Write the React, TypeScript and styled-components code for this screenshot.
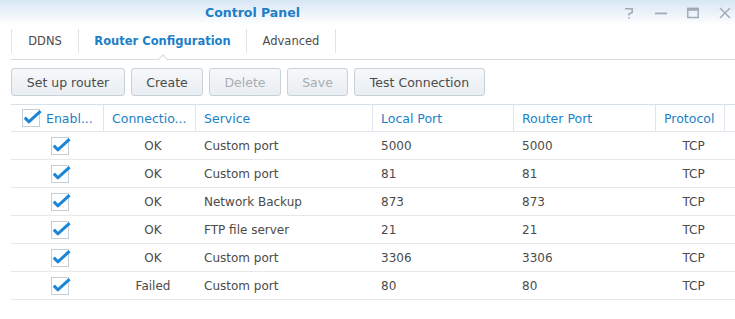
import React from "react";
import styled, { createGlobalStyle } from "styled-components";

const GlobalStyle = createGlobalStyle`
  html, body {
    margin: 0;
    padding: 0;
    background: #fff;
  }
  body {
    font-family: "DejaVu Sans", Verdana, sans-serif;
    font-size: 12px;
    color: #4b4b4b;
  }
`;

const BLUE = "#1c7fc8";
const GRID = "92px 92px 177px 141px 142px 69px";

type Rule = {
  enabled: boolean;
  status: string;
  service: string;
  local: string;
  router: string;
  protocol: string;
};

const rules: Rule[] = [
  { enabled: true, status: "OK", service: "Custom port", local: "5000", router: "5000", protocol: "TCP" },
  { enabled: true, status: "OK", service: "Custom port", local: "81", router: "81", protocol: "TCP" },
  { enabled: true, status: "OK", service: "Network Backup", local: "873", router: "873", protocol: "TCP" },
  { enabled: true, status: "OK", service: "FTP file server", local: "21", router: "21", protocol: "TCP" },
  { enabled: true, status: "OK", service: "Custom port", local: "3306", router: "3306", protocol: "TCP" },
  { enabled: true, status: "Failed", service: "Custom port", local: "80", router: "80", protocol: "TCP" },
];

const Check: React.FC = () => (
  <svg width="20" height="18" viewBox="0 0 20 18">
    <rect x="0.5" y="0.5" width="17" height="17" fill="#fff" stroke="#c3cfd9" />
    <path
      d="M2.8 8.6 L6.8 12.8 L18.6 2.2"
      fill="none"
      stroke="#1b86d8"
      strokeWidth="3"
      strokeLinejoin="round"
    />
  </svg>
);

const HelpIcon = () => (
  <svg width="12" height="12" viewBox="0 0 12 12">
    <path d="M2 1.8 H9.2 V5.4 L6 7 V8.6" fill="none" stroke="#a3acb5" strokeWidth="1.6" />
    <rect x="5.2" y="10" width="1.6" height="1.6" fill="#a3acb5" />
  </svg>
);

const MinIcon = () => (
  <svg width="12" height="12" viewBox="0 0 12 12">
    <rect x="0" y="5.5" width="12" height="1.8" fill="#a3acb5" />
  </svg>
);

const MaxIcon = () => (
  <svg width="12" height="12" viewBox="0 0 12 12">
    <rect x="0.75" y="1.5" width="10.5" height="9" fill="none" stroke="#a3acb5" strokeWidth="1.5" />
    <rect x="0" y="0.8" width="12" height="3" fill="#a3acb5" />
  </svg>
);

const CloseIcon = () => (
  <svg width="12" height="12" viewBox="0 0 12 12">
    <path d="M1 1 L11 11 M11 1 L1 11" stroke="#a3acb5" strokeWidth="1.5" />
  </svg>
);

const App: React.FC = () => (
  <>
    <GlobalStyle />
    <Window>
      <TitleBar>
        <Title>Control Panel</Title>
        <Controls>
          <HelpIcon />
          <MinIcon />
          <MaxIcon />
          <CloseIcon />
        </Controls>
      </TitleBar>

      <TabBar>
        <Tab $w={68}>DDNS</Tab>
        <Tab $w={168} $active>
          Router Configuration
        </Tab>
        <Tab $w={89}>Advanced</Tab>
      </TabBar>

      <Toolbar>
        <Button $w={114}>Set up router</Button>
        <Button $w={72}>Create</Button>
        <Button $w={72} disabled>
          Delete
        </Button>
        <Button $w={61} disabled>
          Save
        </Button>
        <Button $w={131}>Test Connection</Button>
      </Toolbar>

      <Table>
        <HeadRow>
          <HeadCell $first>
            <Check />
            <span>Enabl...</span>
          </HeadCell>
          <HeadCell>Connectio...</HeadCell>
          <HeadCell>Service</HeadCell>
          <HeadCell>Local Port</HeadCell>
          <HeadCell>Router Port</HeadCell>
          <HeadCell>Protocol</HeadCell>
          <HeadCell />
        </HeadRow>
        {rules.map((r, i) => (
          <Row key={i}>
            <Cell $center>{r.enabled && <Check />}</Cell>
            <Cell $center>{r.status}</Cell>
            <Cell>{r.service}</Cell>
            <Cell>{r.local}</Cell>
            <Cell>{r.router}</Cell>
            <Cell $center>{r.protocol}</Cell>
          </Row>
        ))}
      </Table>
    </Window>
  </>
);

const Window = styled.div`
  width: 735px;
  height: 319px;
  overflow: hidden;
  background: #fff;
  display: flex;
  flex-direction: column;
`;

const TitleBar = styled.div`
  height: 25px;
  flex: none;
  display: flex;
  align-items: center;
  padding: 0 4px 0 205px;
  background: linear-gradient(#d8e7f4, #eef5fb 60%, #ffffff);
`;

const Title = styled.div`
  flex: 1;
  font-size: 12.5px;
  font-weight: bold;
  color: ${BLUE};
`;

const Controls = styled.div`
  display: flex;
  align-items: center;
  gap: 20px;
`;

const TabBar = styled.div`
  flex: none;
  height: 35px;
  box-sizing: border-box;
  margin-left: 11px;
  padding-top: 4px;
  display: flex;
  align-items: flex-start;
  border-bottom: 1px solid #d5dbe1;
`;

const Tab = styled.div<{ $w: number; $active?: boolean }>`
  position: relative;
  width: ${(p) => p.$w}px;
  height: 24px;
  box-sizing: border-box;
  display: flex;
  align-items: center;
  justify-content: center;
  border-right: 1px solid #dfe4e9;
  font-size: ${(p) => (p.$active ? "11.5px" : "11.5px")};
  font-weight: ${(p) => (p.$active ? "bold" : "normal")};
  color: ${(p) => (p.$active ? BLUE : "#4b4b4b")};

  &:first-child {
    border-left: 1px solid #dfe4e9;
  }

  ${(p) =>
    p.$active &&
    `
    &::after {
      content: "";
      position: absolute;
      left: 50%;
      top: 100%;
      margin-top: 2.5px;
      width: 8px;
      height: 8px;
      box-sizing: border-box;
      background: #fff;
      border-top: 1px solid #d5dbe1;
      border-left: 1px solid #d5dbe1;
      transform: translateX(-50%) rotate(45deg);
    }
  `}
`;

const Toolbar = styled.div`
  flex: none;
  display: flex;
  gap: 6px;
  margin: 8px 0 0 11px;
`;

const Button = styled.button<{ $w: number }>`
  width: ${(p) => p.$w}px;
  height: 28px;
  box-sizing: border-box;
  padding: 0;
  border: 1px solid #c7d1da;
  border-radius: 3px;
  background: linear-gradient(#f6f8fa, #e9eef2);
  font-family: inherit;
  font-size: 12.5px;
  color: #4b4b4b;

  &:disabled {
    color: #a9adb1;
  }
`;

const Table = styled.div`
  margin: 8px 0 0 11px;
  display: flex;
  flex-direction: column;
`;

const HeadRow = styled.div`
  display: grid;
  grid-template-columns: ${GRID} 1fr;
  height: 28px;
  box-sizing: border-box;
  border-top: 1px solid #d7e1ea;
  border-bottom: 1px solid #dfe6ec;
`;

const HeadCell = styled.div<{ $first?: boolean }>`
  display: flex;
  align-items: center;
  gap: 4px;
  padding-left: ${(p) => (p.$first ? "11px" : "8px")};
  border-left: ${(p) => (p.$first ? "none" : "1px solid #dde6ee")};
  font-size: 12.5px;
  color: ${BLUE};
  white-space: nowrap;
  overflow: hidden;
`;

const Row = styled.div`
  display: grid;
  grid-template-columns: ${GRID};
  height: 28px;
  box-sizing: border-box;
  border-bottom: 1px solid #e8e8e8;
`;

const Cell = styled.div<{ $center?: boolean }>`
  display: flex;
  align-items: center;
  justify-content: ${(p) => (p.$center ? "center" : "flex-start")};
  padding-left: ${(p) => (p.$center ? "8px" : "9px")};
  font-size: 12px;
  color: #4b4b4b;
  white-space: nowrap;
`;

export default App;
